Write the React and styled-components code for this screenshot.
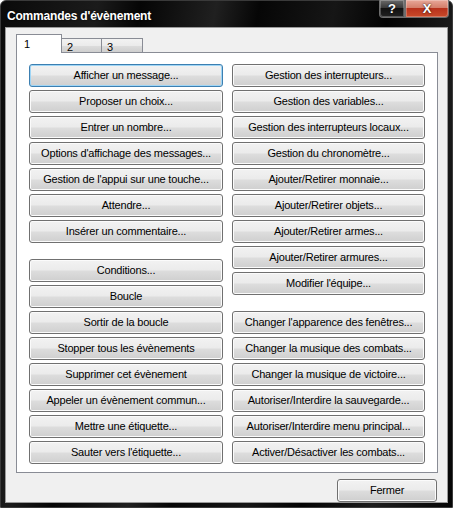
import React from "react";
import styled, { createGlobalStyle } from "styled-components";

const Global = createGlobalStyle`
  html, body { margin: 0; padding: 0; background: #ffffff; }
  body { font-family: "Liberation Sans", Arial, sans-serif; }
  * { box-sizing: border-box; }
`;

const Window = styled.div`
  width: 453px;
  height: 508px;
  display: flex;
  flex-direction: column;
  background: linear-gradient(100deg, #0a0a0a 0%, #1b1b1b 18%, #050505 26%, #202020 40%, #060606 48%, #161616 62%, #030303 72%, #1c1c1c 85%, #050505 100%);
  border: 1px solid #3a3a3a;
  border-radius: 6px 6px 0 0;
  padding: 0 4px 4px 4px;
`;

const TitleBar = styled.div`
  height: 26px;
  display: flex;
  align-items: flex-start;
  justify-content: space-between;
  flex-shrink: 0;
`;

const Title = styled.div`
  color: #ffffff;
  font-family: "Liberation Sans", Arial, sans-serif;
  font-weight: bold;
  font-size: 12px;
  letter-spacing: -0.2px;
  padding: 8px 0 0 2px;
  text-shadow: 0 0 2px #000;
`;

const Caption = styled.div`
  display: flex;
  margin-top: -1px;
  margin-right: -1px;
`;

const CapButton = styled.div`
  height: 18px;
  width: ${(p) => p.$w}px;
  display: flex;
  align-items: center;
  justify-content: center;
  color: #fff;
  font-weight: bold;
  font-size: 13px;
  border: 1px solid #6e6e6e;
  border-top: none;
  border-radius: ${(p) => p.$r};
  background: ${(p) =>
    p.$red
      ? "linear-gradient(#e8a899 0%, #d47f6b 45%, #b8321c 50%, #c84a2a 100%)"
      : "linear-gradient(#6a6a6a 0%, #3a3a3a 45%, #111 50%, #222 100%)"};
  text-shadow: 0 0 2px #000;
  box-shadow: inset 0 0 0 1px rgba(255,255,255,0.25);
`;

const Client = styled.div`
  flex: 1;
  background: #f0f0f0;
  border: 1px solid #9a9a9a;
  display: flex;
  flex-direction: column;
  padding: 6px 9px 0 10px;
`;

const TabStrip = styled.div`
  display: flex;
  align-items: flex-end;
  height: 19px;
  margin-bottom: -1px;
  position: relative;
  z-index: 1;
`;

const Tab = styled.div`
  width: ${(p) => p.$w}px;
  height: ${(p) => (p.$active ? 19 : 15)}px;
  border: 1px solid #898c95;
  border-bottom: ${(p) => (p.$active ? "none" : "1px solid #898c95")};
  margin-left: ${(p) => (p.$first ? 0 : -1)}px;
  background: ${(p) =>
    p.$active ? "#ffffff" : "linear-gradient(#f2f2f2 0%, #ebebeb 50%, #dddddd 51%, #cfcfcf 100%)"};
  font-size: 11px;
  color: #000;
  padding: ${(p) => (p.$active ? "4px 0 0 7px" : "3px 0 0 5px")};
  line-height: 11px;
`;

const Panel = styled.div`
  height: 421px;
  background: #ffffff;
  border: 1px solid #898c95;
  padding: 11px 12px 8px 12px;
  display: grid;
  grid-template-columns: 194px 193px;
  column-gap: 9px;
`;

const Column = styled.div`
  display: flex;
  flex-direction: column;
  gap: 16px;
`;

const Group = styled.div`
  display: flex;
  flex-direction: column;
  gap: 3px;
`;

const Button = styled.div`
  height: 23px;
  width: ${(p) => (p.$w ? `${p.$w}px` : "100%")};
  border: 1px solid ${(p) => (p.$focus ? "#3c7fb1" : "#707070")};
  border-radius: 3px;
  background: linear-gradient(#f2f2f2 0%, #ebebeb 48%, #dddddd 52%, #cfcfcf 100%);
  box-shadow: inset 0 0 0 1px ${(p) => (p.$focus ? "#9fd5f5" : "#fbfbfb")};
  display: flex;
  align-items: center;
  justify-content: center;
  font-family: "Liberation Sans", Arial, sans-serif;
  font-size: 11px;
  letter-spacing: -0.2px;
  color: #000;
  white-space: nowrap;
  padding-bottom: 1px;
`;

const Footer = styled.div`
  display: flex;
  justify-content: flex-end;
  padding: 6px 1px 0 0;
`;

const left1 = [
  "Afficher un message...",
  "Proposer un choix...",
  "Entrer un nombre...",
  "Options d'affichage des messages...",
  "Gestion de l'appui sur une touche...",
  "Attendre...",
  "Insérer un commentaire...",
];
const left2 = [
  "Conditions...",
  "Boucle",
  "Sortir de la boucle",
  "Stopper tous les évènements",
  "Supprimer cet évènement",
  "Appeler un évènement commun...",
  "Mettre une étiquette...",
  "Sauter vers l'étiquette...",
];
const right1 = [
  "Gestion des interrupteurs...",
  "Gestion des variables...",
  "Gestion des interrupteurs locaux...",
  "Gestion du chronomètre...",
  "Ajouter/Retirer monnaie...",
  "Ajouter/Retirer objets...",
  "Ajouter/Retirer armes...",
  "Ajouter/Retirer armures...",
  "Modifier l'équipe...",
];
const right2 = [
  "Changer l'apparence des fenêtres...",
  "Changer la musique des combats...",
  "Changer la musique de victoire...",
  "Autoriser/Interdire la sauvegarde...",
  "Autoriser/Interdire menu principal...",
  "Activer/Désactiver les combats...",
];

const renderGroup = (items, focusFirst) => (
  <Group>
    {items.map((t, i) => (
      <Button key={t} $focus={focusFirst && i === 0}>
        {t}
      </Button>
    ))}
  </Group>
);

export default function App() {
  return (
    <>
      <Global />
      <Window>
        <TitleBar>
          <Title>Commandes d'évènement</Title>
          <Caption>
            <CapButton $w={26} $r="0 0 0 4px">?</CapButton>
            <CapButton $red $w={44} $r="0 0 4px 0">X</CapButton>
          </Caption>
        </TitleBar>
        <Client>
          <TabStrip>
            <Tab $first $active $w={46}>1</Tab>
            <Tab $w={41}>2</Tab>
            <Tab $w={42}>3</Tab>
          </TabStrip>
          <Panel>
            <Column>
              {renderGroup(left1, true)}
              {renderGroup(left2)}
            </Column>
            <Column>
              {renderGroup(right1)}
              {renderGroup(right2)}
            </Column>
          </Panel>
          <Footer>
            <Button $w={100}>Fermer</Button>
          </Footer>
        </Client>
      </Window>
    </>
  );
}
